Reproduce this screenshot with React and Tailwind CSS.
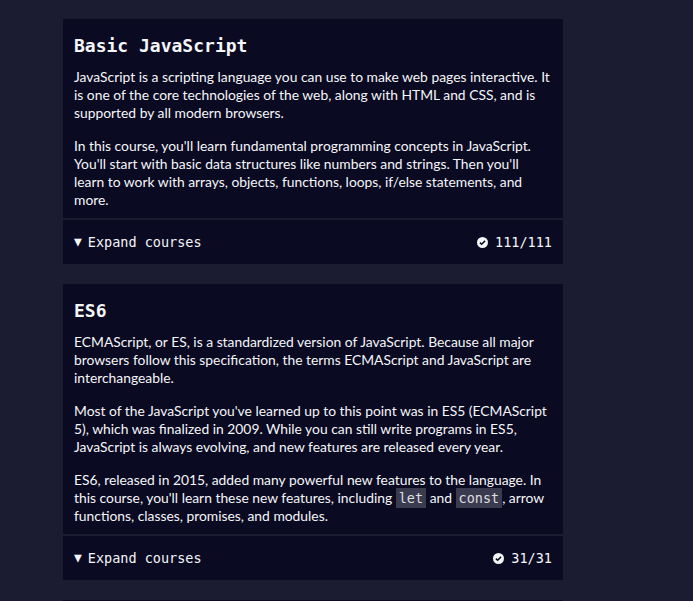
const mono = { fontFamily: '"DejaVu Sans Mono", "Liberation Mono", monospace' };

const CheckIcon = () => (
  <svg width="11" height="11" viewBox="0 0 16 16" className="shrink-0">
    <circle cx="8" cy="8" r="8" fill="#f5f6f7" />
    <path d="M4.3 8.2l2.4 2.4 5-5" stroke="#0a0a23" strokeWidth="2.2" fill="none" />
  </svg>
);

const Code = ({ children }) => (
  <code className="bg-[#3b3b4f] px-[3px] py-[2px] text-[13.5px] text-[#dfdfe2]" style={mono}>
    {children}
  </code>
);

const Block = ({ title, paragraphs, done }) => (
  <div className="bg-[#0a0a23] text-[#f5f6f7]">
    <div className="pl-[11px] pr-[12px] pt-[12px] pb-[9px]">
      <h2 className="mb-[7px] text-[18px] font-bold leading-[30px]" style={mono}>
        {title}
      </h2>
      {paragraphs.map((p, i) => (
        <p key={i} className="mb-[15px] text-[13.85px] leading-[18px] last:mb-0">
          {p}
        </p>
      ))}
    </div>
    <div className="h-[2px] bg-[#1b1b32]" />
    <button
      className="flex h-[44px] w-full items-center justify-between px-[11px] text-[13.5px] text-[#f5f6f7]"
      style={mono}
    >
      <span className="flex items-center gap-[6px]">
        <span className="text-[13px]">▼</span>
        <span>Expand courses</span>
      </span>
      <span className="flex items-center gap-[7px]">
        <CheckIcon />
        <span>{done}</span>
      </span>
    </button>
  </div>
);

export default function App() {
  return (
    <div
      className="h-screen bg-[#1b1b32] pt-[19px] overflow-hidden"
      style={{ fontFamily: 'Lato, "Noto Sans", sans-serif' }}
    >
      <div className="ml-[63px] flex w-[500px] flex-col gap-[20px]">
        <Block
          title="Basic JavaScript"
          done="111/111"
          paragraphs={[
            "JavaScript is a scripting language you can use to make web pages interactive. It is one of the core technologies of the web, along with HTML and CSS, and is supported by all modern browsers.",
            "In this course, you'll learn fundamental programming concepts in JavaScript. You'll start with basic data structures like numbers and strings. Then you'll learn to work with arrays, objects, functions, loops, if/else statements, and more.",
          ]}
        />
        <Block
          title="ES6"
          done="31/31"
          paragraphs={[
            "ECMAScript, or ES, is a standardized version of JavaScript. Because all major browsers follow this specification, the terms ECMAScript and JavaScript are interchangeable.",
            "Most of the JavaScript you've learned up to this point was in ES5 (ECMAScript 5), which was finalized in 2009. While you can still write programs in ES5, JavaScript is always evolving, and new features are released every year.",
            <>
              ES6, released in 2015, added many powerful new features to the language. In this course, you'll learn these new features, including <Code>let</Code> and <Code>const</Code>, arrow functions, classes, promises, and modules.
            </>,
          ]}
        />
        <div className="h-[40px] bg-[#0a0a23]" />
      </div>
    </div>
  );
}
